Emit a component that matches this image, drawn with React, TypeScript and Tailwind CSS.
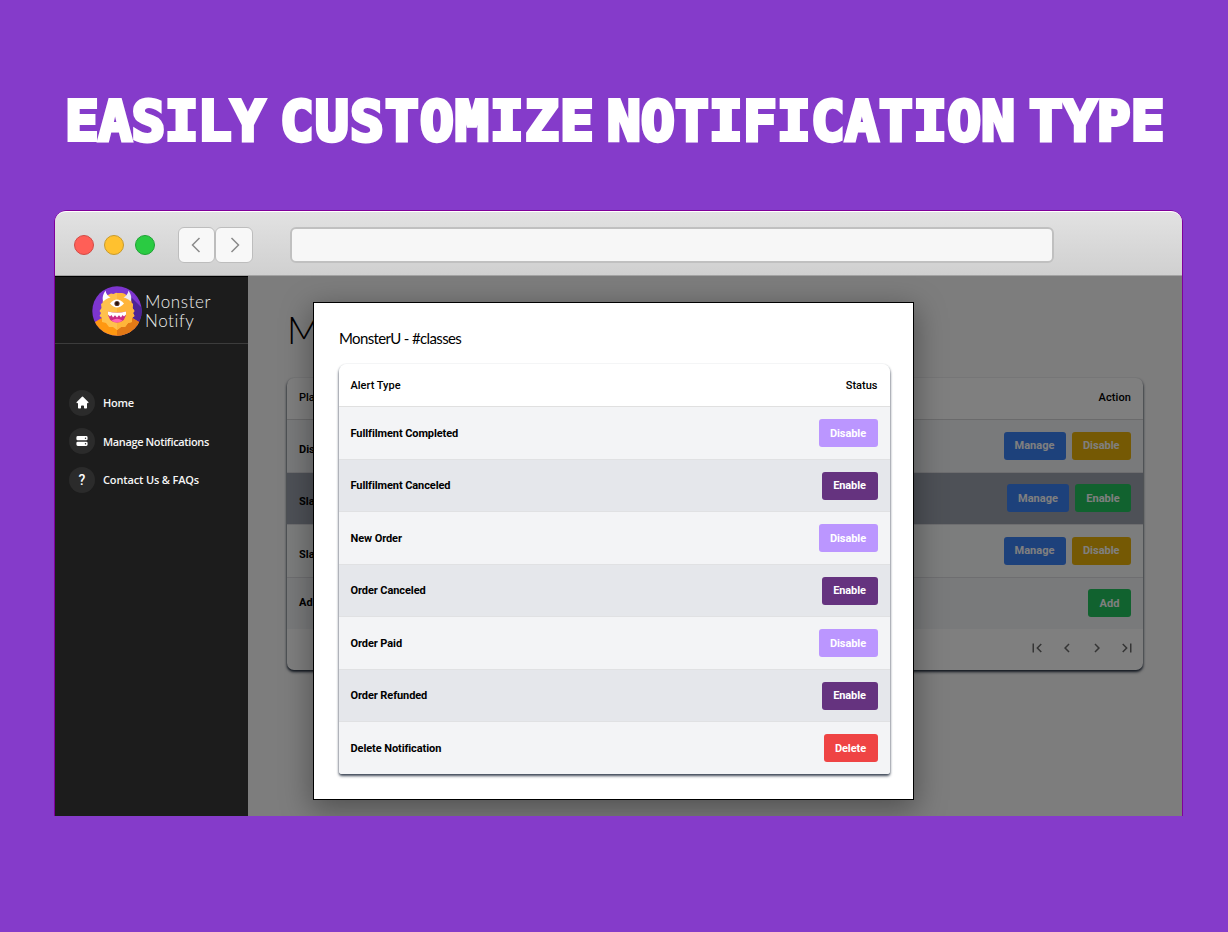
import React from "react";
import { HiHome, HiServer } from "react-icons/hi";
import { MdChevronLeft, MdChevronRight, MdFirstPage, MdLastPage } from "react-icons/md";

const roboto = "font-['Roboto','Liberation_Sans',sans-serif]";

function MonsterLogo() {
  return (
    <svg viewBox="0 0 50 50" className="h-[50px] w-[50px] shrink-0">
      <defs>
        <clipPath id="disc"><circle cx="25" cy="25" r="24.7" /></clipPath>
      </defs>
      <g clipPath="url(#disc)">
        <rect width="50" height="50" fill="#7d35cf" />
        <path d="M37 9 L50 22 V50 H30 Z" fill="#4d2496" />
        <path d="M0 40 L3 36 L8 33 L13 30 L25 42 L37 30 L42 33 L47 36 L50 40 V50 H0 Z" fill="#ff9811" />
        <path d="M25 40 L37 30 L42 33 L47 36 L50 40 V50 H25 Z" fill="#e27916" />
        <path d="M16 9 L19 7.500 L21.500 8 L24 6.800 L27 7.200 L29 7 L33 8 L35 11 L39 13 L39.500 17 L41 18 L40.500 22 L42.500 25 L41 27 L42.500 30 L40 32 L40 36 L36 37 L33 41 L29 41 L25 44 L21 41 L17 41 L14 37 L10 36 L10 32 L7.500 30 L9 27 L7.500 25 L9.500 22 L9 18 L10.500 17 L11 13 Z" fill="#ffc14d" />
        <path d="M25 7 L27 7.200 L29 7 L33 8 L35 11 L39 13 L39.500 17 L41 18 L40.500 22 L42.500 25 L41 27 L42.500 30 L40 32 L40 36 L36 37 L33 41 L29 41 L25 44 Z" fill="#ffb53a" />
        <path d="M13.500 4.500 C10.500 9 10 13 11.500 15.500 C13 13.500 16 12 18.500 11.500 C15.500 10 14 7.500 13.500 4.500 Z" fill="#fff" />
        <path d="M36.500 4.500 C39.500 9 40 13 38.500 15.500 C37 13.500 34 12 31.500 11.500 C34.500 10 36 7.500 36.500 4.500 Z" fill="#eeeaf2" />
        <path d="M18 17.500 Q25 9.500 32 17.500 Q25 25.500 18 17.500 Z" fill="#fff" />
        <circle cx="25" cy="17.500" r="2.600" fill="#5b3426" />
        <circle cx="25" cy="17.500" r="1.400" fill="#21120f" />
        <path d="M16 25.500 Q25 28 34 25.500 Q34.500 36 25 36.500 Q15.500 36 16 25.500 Z" fill="#c92a86" />
        <path d="M19.500 34.500 Q25 31 30.500 34.500 Q28.500 36.500 25 36.500 Q21.500 36.500 19.500 34.500 Z" fill="#ff62b4" />
        <path d="M16 25.500 Q25 28 34 25.500 V28.500 L32 30.500 L30.500 29 L29 31.500 L27 29.300 L25 31.500 L23 29.300 L21 31.500 L19.500 29 L18 30.500 L16 28.500 Z" fill="#fff" />
      </g>
    </svg>
  );
}

function Headline() {
  const word = "block shrink-0 whitespace-nowrap";
  return (
    <h1 className="flex h-[211px] pl-[65px] pt-[91px] font-['DejaVu_Sans_Mono',monospace] text-[56px] font-bold leading-[60px] text-white [-webkit-text-stroke:4px_white] [paint-order:stroke_fill]">
      <span className={`${word} w-[215px] tracking-[-0.500px]`}>EASILY</span>
      <span className={`${word} w-[327px] tracking-[1.300px]`}>CUSTOMIZE</span>
      <span className={`${word} w-[422px] tracking-[0.300px]`}>NOTIFICATION</span>
      <span className={`${word} tracking-[0.200px]`}>TYPE</span>
    </h1>
  );
}

function BrowserBar() {
  const nav = "flex h-[36px] w-[37.500px] items-center justify-center rounded-[6px] border-[1.500px] border-[#bdbdbd] bg-[#f8f8f8]";
  return (
    <div className="flex h-[65px] shrink-0 items-center rounded-t-[11px] border-b border-b-[#a3a3a3] border-t border-t-white bg-linear-to-b from-[#e2e2e2] to-[#d0d0d0] pl-[18.500px] pt-[2px]">
      <div className="flex gap-[10.500px]">
        <i className="size-5 rounded-full border border-[#d24a45] bg-[#ff5f57]" />
        <i className="size-5 rounded-full border border-[#c79a2c] bg-[#ffc12f]" />
        <i className="size-5 rounded-full border border-[#1ea234] bg-[#2acb42]" />
      </div>
      <div className="ml-[23px] flex">
        <div className={nav}>
          <svg width="10" height="16" viewBox="0 0 10 16" fill="none" stroke="#8a8a8a" strokeWidth="1.500"><path d="M8.500 1 L1.500 8 L8.500 15" /></svg>
        </div>
        <div className={nav}>
          <svg width="10" height="16" viewBox="0 0 10 16" fill="none" stroke="#8a8a8a" strokeWidth="1.500" className="ml-[3px]"><path d="M1.500 1 L8.500 8 L1.500 15" /></svg>
        </div>
      </div>
      <div className="ml-[37px] h-[36px] w-[764px] rounded-[6px] border-2 border-[#c0c0c0] bg-[#f7f7f7]" />
    </div>
  );
}

function NavItem({ icon, label, tracking }: { icon: React.ReactNode; label: string; tracking: string }) {
  return (
    <li className="flex h-[38.500px] items-center">
      <span className="flex size-[26px] items-center justify-center rounded-full bg-[#2b2b2b] text-white">{icon}</span>
      <span className={`ml-[8px] whitespace-nowrap font-['Open_Sans','Noto_Sans',sans-serif] text-[11px] font-semibold leading-none text-[#f5f5f5] ${tracking}`}>{label}</span>
    </li>
  );
}

function Sidebar() {
  return (
    <aside className="w-[193px] shrink-0 border-t border-black bg-[#1c1c1c]">
      <div className="flex h-[67px] items-center border-b border-[#3c3c3c] pl-[36.500px] pt-[2px]">
        <MonsterLogo />
        <div className="ml-[3.500px] font-['Lato',sans-serif] text-[17px] font-light leading-[19.500px] tracking-[0.600px] text-[#ececec]">
          <div>Monster</div>
          <div>Notify</div>
        </div>
      </div>
      <ul className="pl-[14px] pt-[39.500px]">
        <NavItem icon={<HiHome size={15} />} label="Home" tracking="tracking-[-0.25px]" />
        <NavItem icon={<HiServer size={14} />} label="Manage Notifications" tracking="tracking-[-0.37px]" />
        <NavItem icon={<span className={`${roboto} text-[14px] font-medium leading-none`}>?</span>} label="Contact Us & FAQs" tracking="tracking-[-0.15px]" />
      </ul>
    </aside>
  );
}

function Button({ color, children }: { color: string; children: string }) {
  return (
    <button className={`${roboto} flex h-[28px] shrink-0 items-center justify-center rounded-[3px] text-[11px] font-bold leading-none ${color}`}>
      {children}
    </button>
  );
}

const listRows = [
  { name: "Dis", row: "bg-[#f3f4f6]", action: "Disable" },
  { name: "Sla", row: "bg-[#9ca3af]", action: "Enable" },
  { name: "Sla", row: "bg-[#f9fafb]", action: "Disable" },
];

function NotificationList() {
  return (
    <section className={`${roboto} mr-[39px] ml-[39px] mt-[29px] h-[292px] overflow-hidden rounded-[7px] bg-white text-[11px] font-bold text-black shadow-[0_2px_3px_rgba(30,41,59,0.9),0_1px_2px_rgba(30,41,59,0.5)]`}>
      <div className="flex h-[42px] items-center justify-between border-b border-[#d4d4d6] px-[12px] font-medium">
        <span>Pla</span>
        <span className="tracking-[0.1px]">Action</span>
      </div>
      {listRows.map((r, i) => (
        <div key={i} className={`flex h-[52.500px] items-center justify-between border-b border-[#dcdde0] px-[12px] ${r.row}`}>
          <span className="pt-[8px]">{r.name}</span>
          <span className="flex gap-[6px]">
            <Button color="w-[62px] bg-[#3b82f6] text-white">Manage</Button>
            {r.action === "Disable" ? (
              <Button color="w-[59.500px] bg-[#eab308] text-white">Disable</Button>
            ) : (
              <Button color="w-[56px] bg-[#22c55e] text-white">Enable</Button>
            )}
          </span>
        </div>
      ))}
      <div className="flex h-[51px] items-center justify-between bg-[#f3f4f6] px-[12px]">
        <span className="pt-px">Ad</span>
        <Button color="w-[43px] bg-[#22c55e] text-white">Add</Button>
      </div>
      <div className="flex h-[39px] items-center justify-end gap-[12px] pr-[7px] text-[#6b6b6b]">
        <MdFirstPage size={18} />
        <MdChevronLeft size={18} />
        <MdChevronRight size={18} />
        <MdLastPage size={18} />
      </div>
    </section>
  );
}

const alerts = [
  { label: "Fullfilment Completed", action: "Disable" },
  { label: "Fullfilment Canceled", action: "Enable" },
  { label: "New Order", action: "Disable" },
  { label: "Order Canceled", action: "Enable" },
  { label: "Order Paid", action: "Disable" },
  { label: "Order Refunded", action: "Enable" },
  { label: "Delete Notification", action: "Delete" },
];

const actionColor: Record<string, string> = {
  Disable: "w-[59px] bg-[#bb96ff] text-white",
  Enable: "w-[56px] bg-[#65337f] text-white",
  Delete: "w-[54px] bg-[#ef4444] text-white",
};

function AlertDialog() {
  return (
    <div role="dialog" className="absolute left-[65px] top-[26px] h-[498px] w-[601px] border-[1.500px] border-black bg-white px-[24px] shadow-[0_8px_28px_2px_rgba(0,0,0,0.35)]">
      <h2 className="mt-[25px] pl-px font-['Lato','Noto_Sans',sans-serif] text-[15px] leading-[20px] tracking-[-0.64px] text-black">MonsterU - #classes</h2>
      <section className={`${roboto} mt-[16px] ml-[0.500px] h-[410px] w-[551px] overflow-hidden rounded-t-[8px] rounded-b-[3px] text-[11px] font-bold tracking-[-0.090px] text-black shadow-[0_2px_3px_rgba(30,41,59,0.8),0_1px_2px_rgba(30,41,59,0.35)]`}>
        <div className="flex h-[43px] items-center justify-between border-b border-[#e0e0e0] bg-white px-[12px] pt-[2px] font-medium tracking-[0px]">
          <span>Alert Type</span>
          <span>Status</span>
        </div>
        {alerts.map((a, i) => (
          <div key={a.label} className={`flex h-[52.500px] items-center justify-between border-b border-[#e0e1e3] px-[12px] pt-px ${i % 2 ? "bg-[#e5e7eb]" : "bg-[#f3f4f6]"}`}>
            <span className="pt-px">{a.label}</span>
            <Button color={actionColor[a.action]}>{a.action}</Button>
          </div>
        ))}
      </section>
    </div>
  );
}

export default function App() {
  return (
    <div className="h-[932px] w-[1228px] overflow-hidden bg-[#853bca]">
      <Headline />
      <div className="ml-[55px] flex h-[605px] w-[1127px] flex-col rounded-t-[12px] shadow-[0_-1px_0_#80009a,-1px_0_0_#80009a,1px_0_0_#80009a]">
        <BrowserBar />
        <div className="flex min-h-0 flex-1">
          <Sidebar />
          <main className="relative min-w-0 flex-1 overflow-hidden bg-[#fafafa]">
            <div className="ml-[39px] mt-[29px] h-[44px] font-['Lato','Open_Sans',sans-serif] text-[37px] font-light leading-[50px] text-black">M</div>
            <NotificationList />
            <div className="absolute inset-0 bg-black/50" />
            <AlertDialog />
          </main>
        </div>
      </div>
    </div>
  );
}
